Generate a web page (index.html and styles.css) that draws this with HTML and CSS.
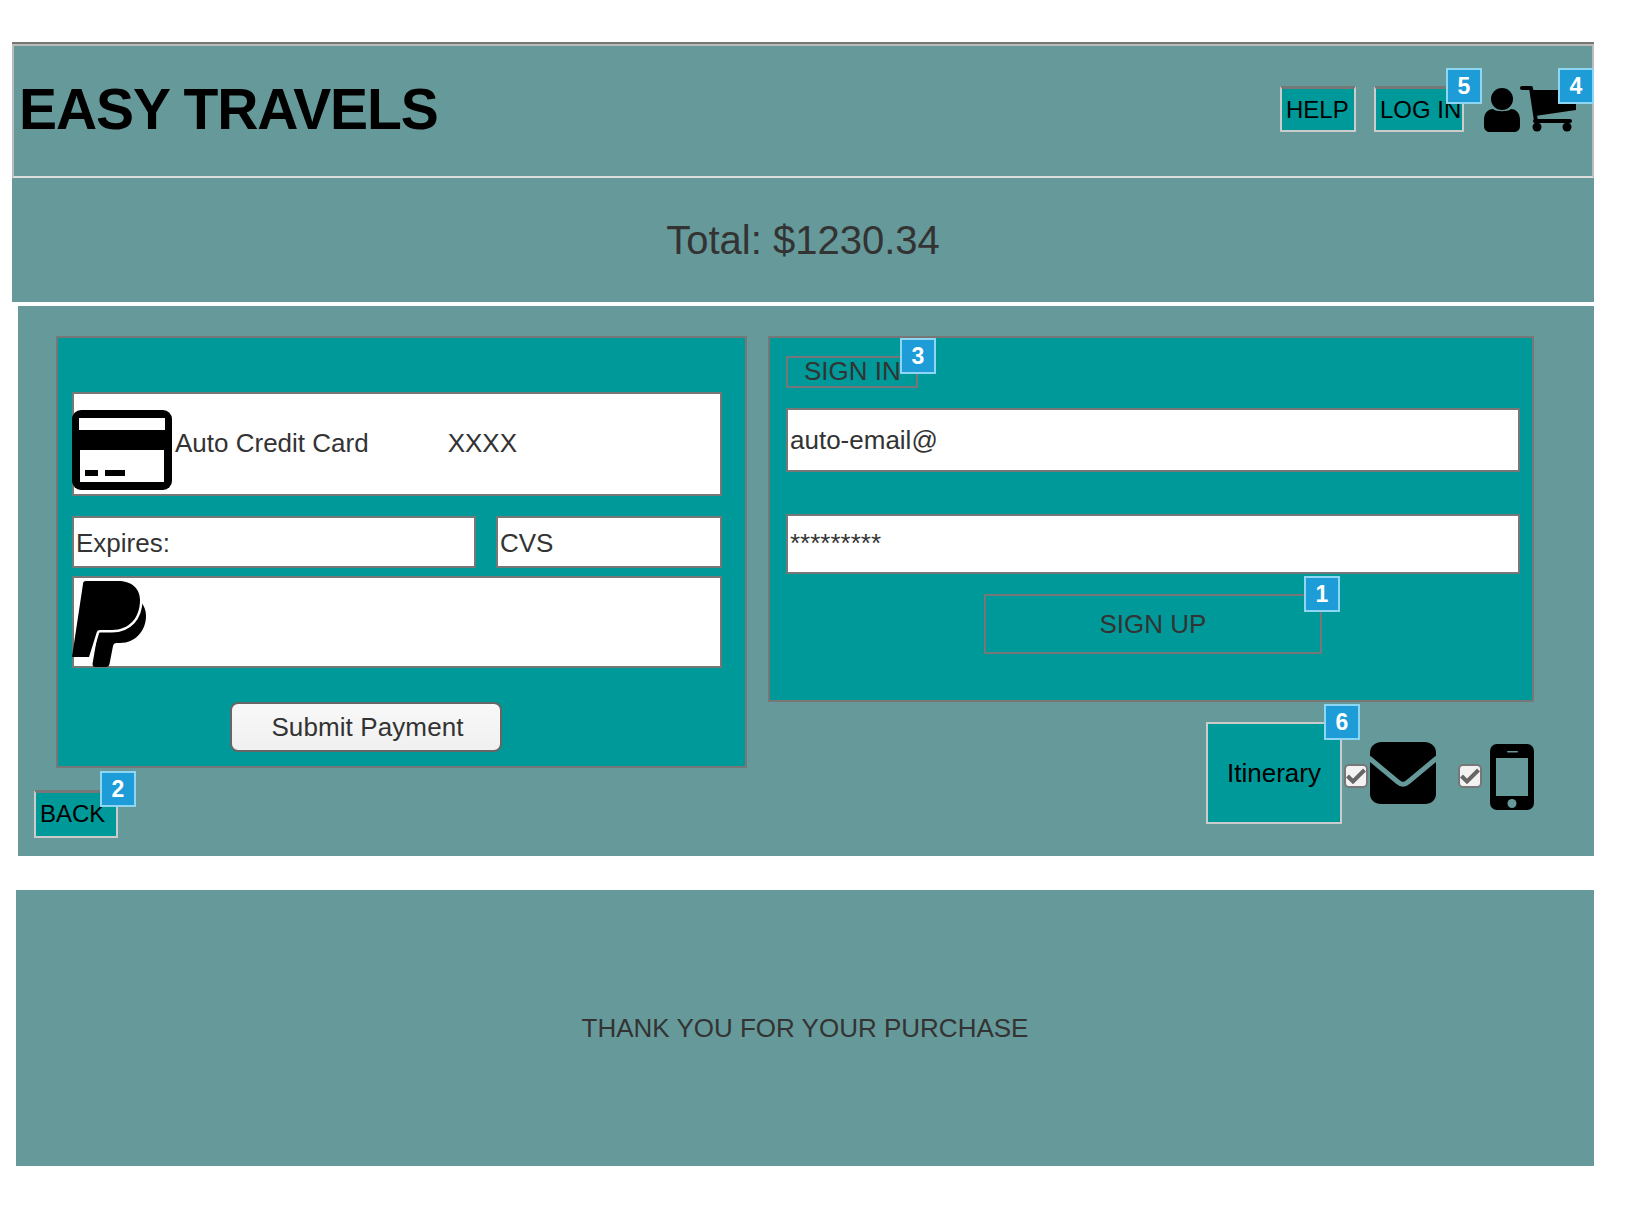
FILE: index.html
```html
<!DOCTYPE html>
<html lang="en">

<head>
    <meta charset="utf-8" />
    <title>Easy Travels</title>
    <link rel="stylesheet" href="styles.css">
</head>

<body>
    <header class="top_bar">
        <h1 class="logo">EASY TRAVELS</h1>
        <div class="top_actions">
            <a class="nav_btn help_btn">HELP</a>
            <a class="nav_btn login_btn">LOG IN<span class="badge badge_login">5</span></a>
            <svg class="user_icon" viewBox="0 0 36 44">
                <circle cx="18" cy="11" r="11" />
                <path d="M0 32C0 25 4 21 9 21C12 24 24 24 27 21C32 21 36 25 36 32V38C36 42 33 44 30 44H6C3 44 0 42 0 38Z" />
            </svg>
            <div class="cart_wrap">
                <svg class="cart_icon" viewBox="0 0 57 46">
                    <rect x="0" y="0" width="13" height="4" rx="2" />
                    <path d="M9 2H13L18 35H14Z" />
                    <path d="M12 4H56V24L15 30Z" />
                    <rect x="13" y="33" width="39" height="4" rx="2" />
                    <circle cx="17" cy="41" r="4.5" />
                    <circle cx="47" cy="41" r="4.5" />
                </svg>
                <span class="badge badge_cart">4</span>
            </div>
        </div>
    </header>

    <section class="total_bar">Total: $1230.34</section>

    <main class="checkout">
        <div class="left_col">
            <form class="pay_card">
                <div class="field card_field">
                    <svg class="card_icon" viewBox="0 0 100 80">
                        <rect width="100" height="80" rx="9" />
                        <rect x="7" y="8" width="86" height="12" fill="#fff" />
                        <rect x="8" y="40" width="84" height="32" fill="#fff" />
                        <rect x="13" y="60" width="13" height="6" />
                        <rect x="33" y="60" width="20" height="6" />
                    </svg>
                    <span class="card_name">Auto Credit Card</span>
                    <span class="card_num">XXXX</span>
                </div>
                <div class="expire_row">
                    <div class="field expire_field">Expires:</div>
                    <div class="field cvs_field">CVS</div>
                </div>
                <div class="field paypal_field">
                    <svg class="paypal_icon" viewBox="0 0 74 88">
                        <path d="M27 46L20.500 84C20.500 86 21.500 87 23 87H34C36 87 37 86 37.500 84L41 66C41.500 64 42.500 63 44.500 63H48C64 63 74 50 74 36C74 30 72 26 69 22Z" />
                        <path class="paypal_gap" d="M14 1H46C59 1 68 8 68 20C68 38 57 50 40 50H28C26 50 25 51 24.500 53L17 78" />
                        <path d="M14 1H46C59 1 68 8 68 20C68 38 57 50 40 50H28C26 50 25 51 24.500 53L17 77H0L11 4C11 2 12 1 14 1Z" />
                    </svg>
                </div>
                <button type="button" class="submit_btn">Submit Payment</button>
            </form>
            <a class="nav_btn back_btn">BACK<span class="badge badge_back">2</span></a>
        </div>

        <div class="right_col">
            <div class="sign_card">
                <div class="sign_in">SIGN IN<span class="badge badge_signin">3</span></div>
                <div class="field email_field">auto-email@</div>
                <div class="field pass_field">*********</div>
                <div class="sign_up">SIGN UP<span class="badge badge_signup">1</span></div>
            </div>
            <div class="send_row">
                <a class="itinerary_btn">Itinerary<span class="badge badge_itinerary">6</span></a>
                <span class="check_box">
                    <svg viewBox="0 0 20 20"><path d="M1.500 10L7 15.500L18.500 4" /></svg>
                </span>
                <svg class="mail_icon" viewBox="0 0 66 62">
                    <path d="M12 0H54C61 0 66 4 66 11V52C66 58 61 62 55 62H11C5 62 0 58 0 52V11C0 4 5 0 12 0Z" />
                    <path d="M-1 16L28 40C31 43 35 43 38 40L67 16" fill="none" stroke="#669999" stroke-width="5" />
                </svg>
                <span class="check_box check_phone">
                    <svg viewBox="0 0 20 20"><path d="M1.500 10L7 15.500L18.500 4" /></svg>
                </span>
                <svg class="phone_icon" viewBox="0 0 44 66">
                    <rect width="44" height="66" rx="7" />
                    <rect x="6" y="14" width="32" height="38" fill="#669999" />
                    <rect x="17" y="7" width="11" height="1.5" rx="0.7" fill="#669999" />
                    <circle cx="22" cy="59.5" r="4.5" fill="#669999" />
                </svg>
            </div>
        </div>
    </main>

    <footer class="thanks_bar">THANK YOU FOR YOUR PURCHASE</footer>
</body>

</html>
```

FILE: styles.css
```css
* {
    box-sizing: border-box;
}

html,
body {
    margin: 0;
    padding: 0;
    background-color: #fff;
}

body {
    font-family: "Liberation Sans", Arial, sans-serif;
    font-size: 26px;
    color: #333;
    padding-top: 44px;
    padding-right: 36px;
    min-height: 1232px;
}

/* top */
.top_bar {
    display: flex;
    align-items: center;
    justify-content: space-between;
    height: 134px;
    margin-left: 12px;
    padding: 0 15px 4px 5px;
    background-color: #669999;
    border: 2px solid #bbb;
    border-bottom-color: #ddd;
    box-shadow: 0 -2px 0 #777;
}

.logo {
    margin: 0;
    font-size: 57px;
    line-height: 1;
    letter-spacing: -1.1px;
    color: #000;
}

.top_actions {
    display: flex;
    align-items: flex-end;
}

.nav_btn {
    position: relative;
    display: block;
    height: 46px;
    padding-left: 4px;
    font-size: 24px;
    line-height: 42px;
    white-space: nowrap;
    color: #000;
    background-color: #009999;
    border: 2px solid #ccc;
    border-top: 3px solid #777;
}

.help_btn {
    width: 76px;
}

.login_btn {
    width: 90px;
    margin-left: 18px;
}

.user_icon {
    display: block;
    width: 36px;
    height: 44px;
    margin-left: 20px;
}

.cart_wrap {
    position: relative;
    height: 46px;
}

.cart_icon {
    display: block;
    width: 57px;
    height: 46px;
}

.badge {
    position: absolute;
    width: 36px;
    height: 36px;
    font-size: 23px;
    font-weight: bold;
    line-height: 33px;
    text-align: center;
    color: #fff;
    background-color: #1e9cd8;
    border: 2px solid #8fd6f2;
}

.badge_login {
    top: -21px;
    right: -20px;
}

.badge_cart {
    top: -18px;
    right: -17px;
}

.badge_back {
    top: -22px;
    right: -20px;
}

.badge_signin {
    top: -20px;
    left: 112px;
}

.badge_signup {
    top: -20px;
    right: -20px;
}

.badge_itinerary {
    top: -20px;
    right: -20px;
}

/* total */
.total_bar {
    display: flex;
    align-items: center;
    justify-content: center;
    height: 124px;
    margin-left: 12px;
    font-size: 40px;
    background-color: #669999;
}

/* middle */
.checkout {
    display: flex;
    align-items: flex-start;
    gap: 21px;
    height: 550px;
    margin-top: 4px;
    margin-left: 18px;
    padding: 30px 60px 0 16px;
    background-color: #669999;
}

.left_col {
    width: 713px;
    flex-shrink: 0;
}

.right_col {
    flex: 1;
}

.pay_card {
    display: flex;
    flex-direction: column;
    height: 432px;
    margin-left: 22px;
    padding: 54px 23px 0 14px;
    background-color: #009999;
    border: 2px solid #777;
}

.field {
    display: flex;
    align-items: center;
    background-color: #fff;
    border: 2px solid #777;
}

.card_field {
    align-items: flex-start;
    height: 104px;
    margin-bottom: 20px;
}

.card_icon {
    display: block;
    width: 100px;
    height: 80px;
    margin: 16px 3px 0 -2px;
}

.card_name {
    margin-top: 34px;
    line-height: 30px;
}

.card_num {
    margin-top: 34px;
    margin-left: 79px;
    line-height: 30px;
}

.expire_row {
    display: flex;
    gap: 20px;
    margin-bottom: 8px;
}

.expire_field {
    width: 404px;
    height: 52px;
    padding: 2px 0 0 2px;
}

.cvs_field {
    flex: 1;
    height: 52px;
    padding: 2px 0 0 2px;
}

.paypal_field {
    align-items: flex-start;
    height: 92px;
}

.paypal_icon {
    display: block;
    width: 74px;
    height: 88px;
    margin: 2px 0 0 -2px;
}

.paypal_gap {
    fill: none;
    stroke: #fff;
    stroke-width: 5;
}

.submit_btn {
    width: 272px;
    height: 50px;
    margin-top: 34px;
    margin-left: 158px;
    padding: 0 0 0 3px;
    font-family: inherit;
    font-size: 26px;
    letter-spacing: .1px;
    color: #333;
    background: linear-gradient(#f8f8f8, #f0f0f0);
    border: 2px solid #666;
    border-radius: 8px;
}

.back_btn {
    width: 84px;
    height: 48px;
    margin-top: 22px;
    line-height: 42px;
}

.sign_card {
    height: 366px;
    padding: 18px 12px 0 16px;
    background-color: #009999;
    border: 2px solid #777;
}

.sign_in {
    position: relative;
    width: 132px;
    height: 32px;
    margin-bottom: 20px;
    padding-left: 16px;
    line-height: 26px;
    border: 2px solid #777;
}

.email_field {
    height: 64px;
    margin-bottom: 42px;
    padding: 0 2px;
}

.pass_field {
    height: 60px;
    margin-bottom: 20px;
    padding: 0 2px 2px;
}

.sign_up {
    position: relative;
    width: 338px;
    height: 60px;
    margin: 0 auto;
    line-height: 56px;
    text-align: center;
    border: 2px solid #777;
}

.send_row {
    display: flex;
    align-items: center;
    justify-content: flex-end;
    margin-top: 20px;
}

.itinerary_btn {
    position: relative;
    display: block;
    width: 136px;
    height: 102px;
    padding-top: 34px;
    line-height: 30px;
    text-align: center;
    color: #000;
    background-color: #009999;
    border: 2px solid #ccc;
}

.check_box {
    display: block;
    width: 24px;
    height: 24px;
    margin-top: 6px;
    margin-left: 2px;
    background-color: #f2f2f2;
    border: 2px solid #777;
    border-radius: 5px;
}

.check_box svg {
    display: block;
    width: 20px;
    height: 20px;
    fill: none;
    stroke: #666;
    stroke-width: 4;
}

.check_phone {
    margin-left: 22px;
}

.mail_icon {
    display: block;
    width: 66px;
    height: 62px;
    margin-left: 2px;
}

.phone_icon {
    display: block;
    width: 44px;
    height: 66px;
    margin-top: 8px;
    margin-left: 8px;
}

/* bottom */
.thanks_bar {
    display: flex;
    align-items: center;
    justify-content: center;
    height: 276px;
    margin-top: 34px;
    margin-left: 16px;
    background-color: #669999;
}
```
